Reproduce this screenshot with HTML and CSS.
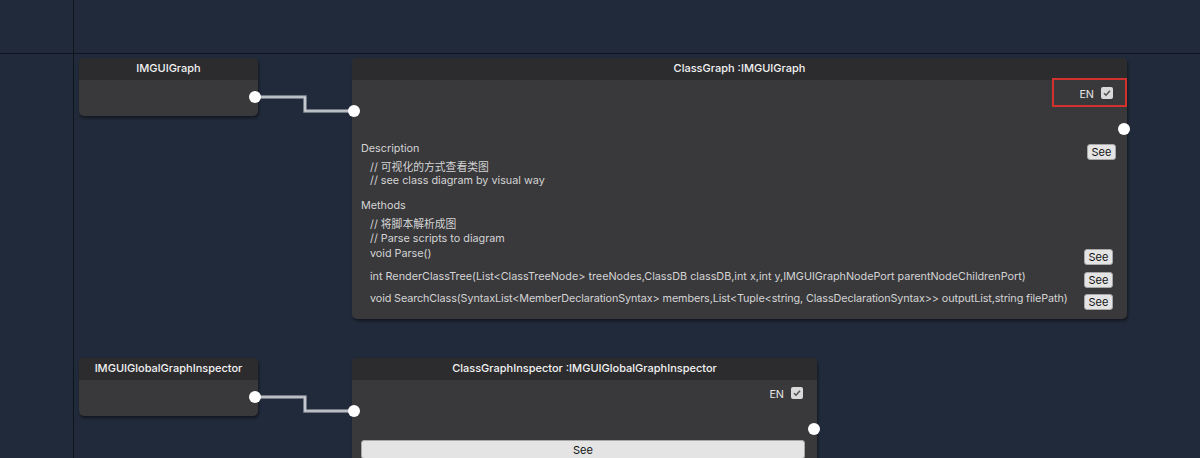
FILE: index.html
```html
<!DOCTYPE html>
<html>
<head>
    <title>Class Graph</title>
    <link rel="stylesheet" href="styles.css">
</head>
<body>
<div class="canvas">

    <!-- wires between nodes -->
    <svg class="wires" width="1200" height="458">
        <polyline points="255,97 305,97 305,111 354,111" class="wire-outer"/>
        <polyline points="255,97 305,97 305,111 354,111" class="wire-inner"/>
        <polyline points="255,397 305,397 305,411 354,411" class="wire-outer"/>
        <polyline points="255,397 305,397 305,411 354,411" class="wire-inner"/>
    </svg>

    <!-- IMGUIGraph -->
    <div class="node node-small" id="node-graph">
        <div class="node-title">IMGUIGraph</div>
        <div class="node-body"></div>
        <span class="port port-out"></span>
    </div>

    <!-- ClassGraph -->
    <div class="node node-class" id="node-class">
        <div class="node-title">ClassGraph :IMGUIGraph</div>
        <div class="node-body">
            <div class="en-row">
                <span>EN</span>
                <span class="check">
                    <svg width="12" height="12" viewBox="0 0 12 12"><path d="M3 6.2 L5 8.2 L9 3.8" fill="none" stroke="#555" stroke-width="1.6"/></svg>
                </span>
            </div>

            <div class="section desc">
                <div class="section-head">
                    <span>Description</span>
                    <button class="see see-desc">See</button>
                </div>
                <div class="lines">
                    <div>// 可视化的方式查看类图</div>
                    <div>// see class diagram by visual way</div>
                </div>
            </div>

            <div class="section methods">
                <div class="section-title">Methods</div>
                <div class="lines comments">
                    <div>// 将脚本解析成图</div>
                    <div>// Parse scripts to diagram</div>
                </div>
                <div class="method">
                    <span>void Parse()</span>
                    <button class="see">See</button>
                </div>
                <div class="method">
                    <span>int RenderClassTree(List&lt;ClassTreeNode&gt; treeNodes,ClassDB classDB,int x,int y,IMGUIGraphNodePort parentNodeChildrenPort)</span>
                    <button class="see">See</button>
                </div>
                <div class="method">
                    <span class="tight">void SearchClass(SyntaxList&lt;MemberDeclarationSyntax&gt; members,List&lt;Tuple&lt;string, ClassDeclarationSyntax&gt;&gt; outputList,string filePath)</span>
                    <button class="see">See</button>
                </div>
            </div>
        </div>
        <span class="port port-in"></span>
        <span class="port port-out"></span>
    </div>

    <div class="highlight"></div>

    <!-- IMGUIGlobalGraphInspector -->
    <div class="node node-small" id="node-inspector">
        <div class="node-title">IMGUIGlobalGraphInspector</div>
        <div class="node-body"></div>
        <span class="port port-out"></span>
    </div>

    <!-- ClassGraphInspector -->
    <div class="node node-class-inspector" id="node-class-inspector">
        <div class="node-title">ClassGraphInspector :IMGUIGlobalGraphInspector</div>
        <div class="node-body">
            <div class="en-row">
                <span>EN</span>
                <span class="check">
                    <svg width="12" height="12" viewBox="0 0 12 12"><path d="M3 6.2 L5 8.2 L9 3.8" fill="none" stroke="#555" stroke-width="1.6"/></svg>
                </span>
            </div>
            <button class="see see-wide">See</button>
        </div>
        <span class="port port-in"></span>
        <span class="port port-out"></span>
    </div>

</div>
</body>
</html>
```

FILE: styles.css
```css
body {
    margin: 0;
    font-family: Inter, "Noto Sans CJK SC", sans-serif;
    font-size: 10.8px;
    color: #d4d4d4;
}
.canvas {
    position: relative;
    width: 1200px;
    height: 458px;
    overflow: hidden;
    background-color: #212a3a;
    background-image:
        linear-gradient(#10141c, #10141c),
        linear-gradient(#10141c, #10141c);
    background-size: 1px 100%, 100% 1px;
    background-position: 73px 0, 0 53px;
    background-repeat: no-repeat;
}
.wires {
    position: absolute;
    left: 0;
    top: 0;
}
.wire-outer {
    fill: none;
    stroke: #8d939d;
    stroke-width: 3.5;
}
.wire-inner {
    fill: none;
    stroke: #e8eaee;
    stroke-width: 1.2;
}

/* nodes */
.node {
    position: absolute;
    background: #39393c;
    border-radius: 5px;
    box-shadow: 1px 2px 3px rgba(0,0,0,0.45);
}
.node-title {
    height: 22px;
    line-height: 21px;
    background: #2c2c2f;
    border-radius: 5px 5px 0 0;
    text-align: center;
    color: #f2f2f2;
    font-size: 11px;
    font-weight: 500;
}
.node-small {
    width: 179px;
}
.node-small .node-body {
    height: 36px;
}
#node-graph { left: 79px; top: 58px; }
#node-inspector { left: 79px; top: 358px; }

.node-class {
    left: 352px;
    top: 58px;
    width: 775px;
}
.node-class-inspector {
    left: 352px;
    top: 358px;
    width: 465px;
    height: 120px;
}

/* ports */
.port {
    position: absolute;
    width: 12px;
    height: 12px;
    border-radius: 50%;
    background: #fff;
}
.node-small .port-out { right: -3px; top: 33px; }
.node-class .port-in { left: -4px; top: 47px; }
.node-class .port-out { right: -3px; top: 65px; }
.node-class-inspector .port-in { left: -4px; top: 47px; }
.node-class-inspector .port-out { right: -3px; top: 65px; }

/* body content */
.node-class .node-body {
    padding: 6px 11px 9px 9px;
}
.node-class-inspector .node-body {
    padding: 6px 12px 0 9px;
}
.en-row {
    display: flex;
    justify-content: flex-end;
    align-items: center;
    height: 16px;
    gap: 7px;
    color: #e6e6e6;
}
.node-class .en-row {
    padding-right: 3px;
}
.node-class-inspector .en-row {
    padding-right: 2px;
}
.check {
    display: flex;
    width: 12px;
    height: 12px;
    background: #dadada;
    border-radius: 2px;
    margin-top: -3px;
}

.section-head {
    display: flex;
    justify-content: space-between;
    align-items: flex-start;
    line-height: 14px;
}
.section-title {
    line-height: 14px;
}
.desc {
    margin-top: 40px;
}
.desc .see-desc {
    margin-top: 2px;
}
.desc .lines {
    margin-top: 1px;
    line-height: 13px;
}
.lines {
    padding-left: 9px;
    line-height: 14px;
}
.methods {
    margin-top: 12px;
}
.comments {
    margin-top: 5px;
}
.method {
    display: flex;
    justify-content: space-between;
    align-items: flex-start;
    padding-left: 9px;
    padding-right: 3px;
    line-height: 16px;
    margin-bottom: 3.5px;
    white-space: nowrap;
}
.method:last-child {
    margin-bottom: 0;
}
.method .see {
    margin-top: 3px;
    flex-shrink: 0;
}
.tight {
    letter-spacing: -0.1px;
}

.see {
    height: 16px;
    width: 29px;
    padding: 0;
    font-family: Inter, sans-serif;
    font-size: 11px;
    color: #111;
    background: #e4e4e4;
    border: 1px solid #a8a8a8;
    border-radius: 3px;
}
.see-wide {
    display: block;
    width: 100%;
    height: 19px;
    margin-top: 38px;
}

.highlight {
    position: absolute;
    left: 1052px;
    top: 78px;
    width: 71px;
    height: 25px;
    border: 2px solid #d2322d;
}
```
